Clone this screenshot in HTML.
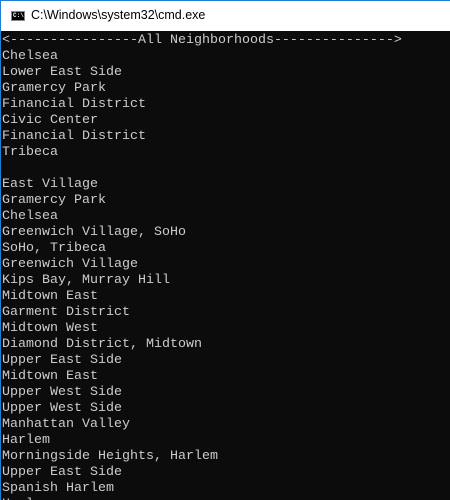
<!DOCTYPE html>
<html><head><style>
html,body{margin:0;padding:0;width:450px;height:500px;overflow:hidden;background:#0c0c0c}
.win{position:absolute;left:0;top:0;width:450px;height:500px;border-top:1px solid #1e7dd6;border-left:1px solid #1e7dd6;box-sizing:border-box;overflow:hidden}
.title{position:absolute;left:0;top:0;width:449px;height:30px;background:#fff}
.icon{position:absolute;left:10px;top:10px;width:14px;height:10px;background:#000;border:1px solid #888;box-sizing:border-box}
.icon span{position:absolute;left:1px;top:1px;color:#fff;font:bold 6px "Liberation Mono",monospace;line-height:6px}
.tt{position:absolute;left:30px;top:7px;font:12.5px "Liberation Sans",sans-serif;color:#000}
.con{position:absolute;left:0;top:30px;width:449px;height:480px;background:#0c0c0c}
pre{margin:0;position:absolute;left:1px;top:2px;font-family:"Liberation Mono",monospace;font-size:13.33px;line-height:16px;color:#cccccc}
</style></head><body>
<div class="win">
<div class="title"><div class="icon"><span>C:\</span></div><div class="tt">C:\Windows\system32\cmd.exe</div></div>
<div class="con"><pre>&lt;----------------All Neighborhoods---------------&gt;
Chelsea
Lower East Side
Gramercy Park
Financial District
Civic Center
Financial District
Tribeca

East Village
Gramercy Park
Chelsea
Greenwich Village, SoHo
SoHo, Tribeca
Greenwich Village
Kips Bay, Murray Hill
Midtown East
Garment District
Midtown West
Diamond District, Midtown
Upper East Side
Midtown East
Upper West Side
Upper West Side
Manhattan Valley
Harlem
Morningside Heights, Harlem
Upper East Side
Spanish Harlem
Harlem</pre></div>
</div>
</body></html>
